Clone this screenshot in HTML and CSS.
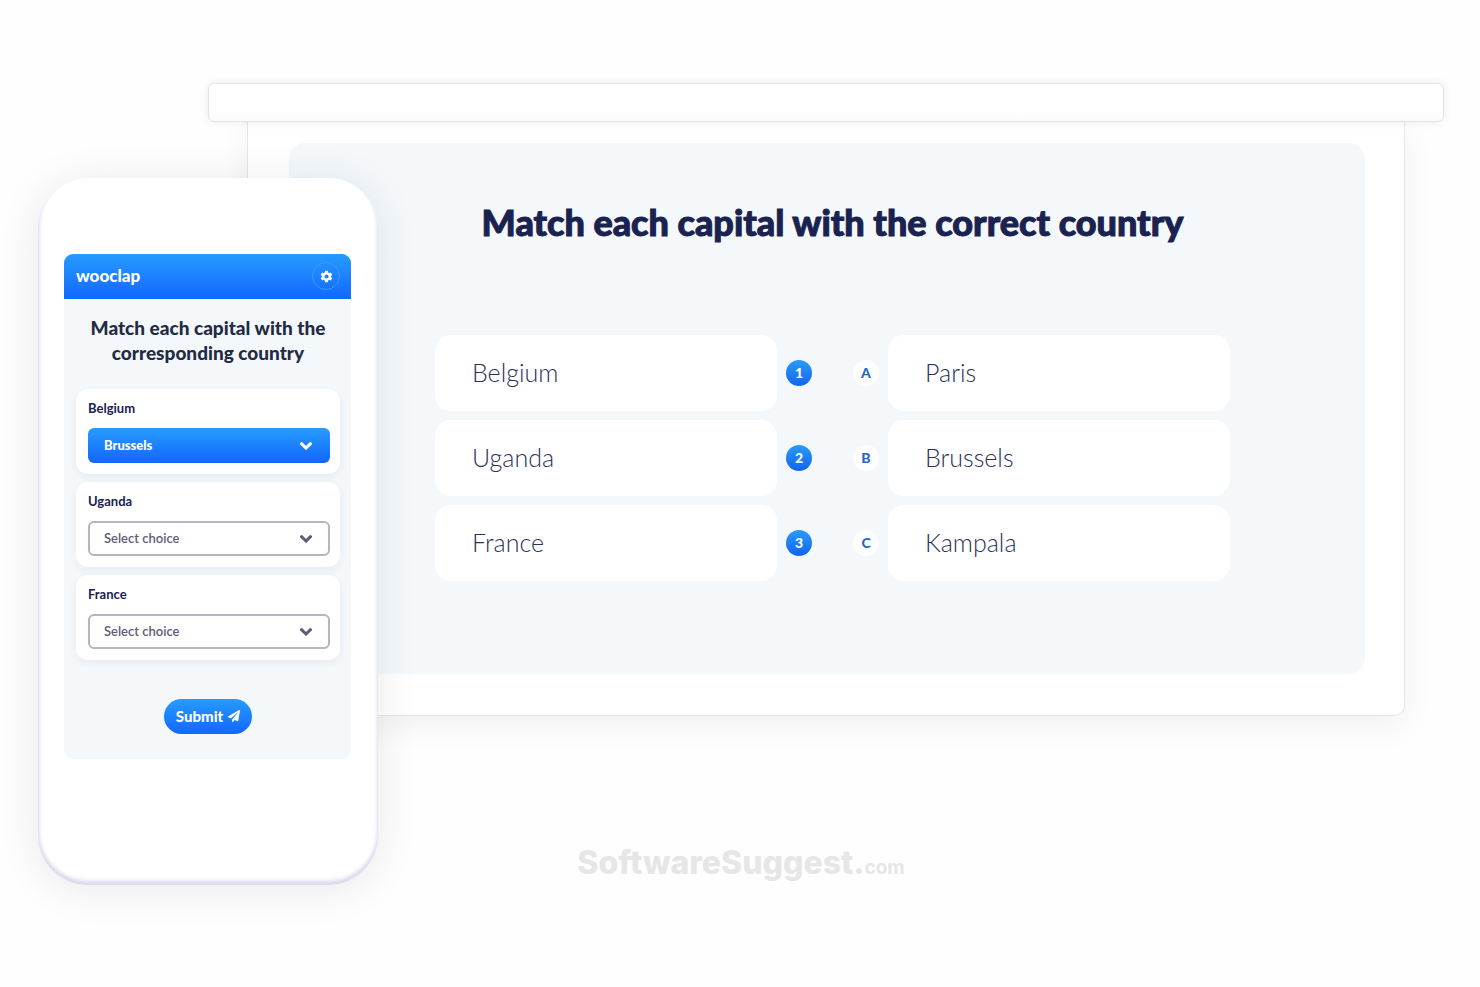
FILE: index.html
```html
<!DOCTYPE html>
<html lang="en">
<head>
<meta charset="utf-8">
<meta name="viewport" content="width=device-width, initial-scale=1">
<title>Wooclap – Matching question</title>
<link rel="stylesheet" href="styles.css">
</head>
<body>
<main class="scene">
  <section class="board" aria-labelledby="board-title">
    <div class="rail"></div>
    <div class="screen">
      <div class="slide">
        <h1 class="slide-title" id="board-title">Match each capital with the correct country</h1>
        <div class="pairs">
          <div class="tile">Belgium</div>
          <span class="badge badge-number">1</span>
          <span class="badge badge-letter">A</span>
          <div class="tile">Paris</div>
          <div class="tile">Uganda</div>
          <span class="badge badge-number">2</span>
          <span class="badge badge-letter">B</span>
          <div class="tile">Brussels</div>
          <div class="tile">France</div>
          <span class="badge badge-number">3</span>
          <span class="badge badge-letter">C</span>
          <div class="tile">Kampala</div>
        </div>
      </div>
    </div>
  </section>

  <section class="phone" aria-labelledby="phone-title">
    <div class="app">
      <header class="app-bar">
        <span class="brand">wooclap</span>
        <button class="settings" type="button" aria-label="Settings">
          <svg class="gear" viewBox="0 0 24 24" aria-hidden="true"><path fill="currentColor" fill-rule="evenodd" d="M9.5 1.5h5l.7 3.2 1.9 1.1 3.1-1 2.5 4.3-2.4 2.2v1.4l2.4 2.2-2.5 4.3-3.1-1-1.9 1.1-.7 3.2h-5l-.7-3.2-1.9-1.1-3.1 1-2.5-4.3 2.4-2.2v-1.4L1.300 9.100l2.500-4.300 3.100 1 1.900-1.100zM12 8.200a3.800 3.800 0 1 0 0 7.600 3.800 3.800 0 0 0 0-7.600z"/></svg>
        </button>
      </header>
      <form class="quiz">
        <h2 class="quiz-title" id="phone-title">Match each capital with the corresponding country</h2>
        <div class="cards">
          <div class="card">
            <label class="card-label" for="belgium">Belgium</label>
            <div class="picker picker-chosen">
              <select class="picker-select" id="belgium"><option>Brussels</option><option>Paris</option><option>Kampala</option></select>
              <svg class="chevron" viewBox="0 0 12 8" aria-hidden="true"><path d="M1.500 1.700 6 6l4.500-4.300"/></svg>
            </div>
          </div>
          <div class="card">
            <label class="card-label" for="uganda">Uganda</label>
            <div class="picker">
              <select class="picker-select" id="uganda"><option>Select choice</option><option>Brussels</option><option>Paris</option><option>Kampala</option></select>
              <svg class="chevron" viewBox="0 0 12 8" aria-hidden="true"><path d="M1.500 1.700 6 6l4.500-4.300"/></svg>
            </div>
          </div>
          <div class="card">
            <label class="card-label" for="france">France</label>
            <div class="picker">
              <select class="picker-select" id="france"><option>Select choice</option><option>Brussels</option><option>Paris</option><option>Kampala</option></select>
              <svg class="chevron" viewBox="0 0 12 8" aria-hidden="true"><path d="M1.500 1.700 6 6l4.500-4.300"/></svg>
            </div>
          </div>
        </div>
        <button class="submit" type="button">Submit
          <svg class="plane" viewBox="0 0 512 512" aria-hidden="true"><path fill="currentColor" d="M476 3.200 12.500 270.600c-18.100 10.400-15.800 35.600 2.200 43.200L121 358.400l287.300-253.200c5.500-4.900 13.300 2.600 8.600 8.300L176 407v80.500c0 23.600 28.500 32.900 42.500 15.800L282 426l124.600 52.200c14.200 6 30.400-2.900 33-18.200l72-432C515 7.800 493.300-6.800 476 3.200z"/></svg>
        </button>
      </form>
    </div>
  </section>

  <footer class="watermark">SoftwareSuggest.<span class="watermark-tld">com</span></footer>
</main>
</body>
</html>
```

FILE: styles.css
```css
* { box-sizing: border-box; }

:root {
  --navy: #1a2250;
  --mist: #f4f8fb;
  --blue: linear-gradient(#279bff, #1267ff);
}

body {
  margin: 0;
  background: #fefefe;
  color: var(--navy);
  font-family: Lato, "Liberation Sans", sans-serif;
}

h1, h2 { margin: 0; }

button, select { font: inherit; }

.scene {
  display: grid;
  grid-template-columns: 170px 170px 1fr;
  grid-template-rows: auto 1fr;
  padding: 83px 36px 48px 38px;
}

/* Projector screen */

.board { grid-area: 1 / 2 / 2 / 4; }

.rail {
  position: relative;
  height: 39px;
  border: 1px solid #e4e4e4;
  border-radius: 6px;
  background: linear-gradient(#fff 70%, #fafafa);
  box-shadow: 0 0 10px rgba(0, 0, 0, 0.08);
}

.screen {
  margin: 0 39px;
  padding: 21px 39px 41px 41px;
  border: 1px solid #e6e6e6;
  border-top: 0;
  border-radius: 0 0 10px 10px;
  background: #fff;
  box-shadow: 0 10px 32px rgba(0, 0, 0, 0.06);
}

.slide {
  padding: 56px 135px 93px 146px;
  border-radius: 16px;
  background: var(--mist);
}

.slide-title {
  margin-bottom: 90px;
  font-size: 36px;
  line-height: 46px;
  font-weight: 900;
  text-align: center;
  white-space: nowrap;
  -webkit-text-stroke: 1px currentColor;
}

.pairs {
  display: grid;
  grid-template-columns: 1fr 58px 26px 1fr;
  gap: 9px;
  align-items: center;
}

.tile {
  padding: 21px 37px 23px;
  border-radius: 16px;
  background: #fff;
  color: #2c3158;
  font-size: 25px;
  line-height: 32px;
  font-weight: 300;
}

.badge {
  display: grid;
  place-items: center;
  width: 26px;
  height: 26px;
  border-radius: 50%;
  font-size: 14px;
  line-height: 16px;
  font-weight: 900;
}

.badge-number {
  background: linear-gradient(#2a9bf5, #1264f2);
  color: #fff;
}

.badge-letter {
  background: #fdfefe;
  color: #2468c4;
}

/* Phone */

.phone {
  position: relative;
  grid-area: 1 / 1 / 3 / 3;
  margin-top: 95px;
  padding: 76px 27px 126px 26px;
  border-radius: 50px;
  background: #fff;
  box-shadow:
    inset 0 -4px 4px #dcd8ea,
    inset 2px -2px 3px #efedfa,
    inset -2px -2px 3px #f6f5fa,
    0 4px 40px rgba(30, 40, 60, 0.1);
}

.app {
  overflow: hidden;
  border-radius: 9px;
  background: var(--mist);
}

.app-bar {
  display: flex;
  align-items: center;
  justify-content: space-between;
  padding: 8px 11px 9px 12px;
  background: var(--blue);
  color: #fff;
}

.brand {
  font-size: 17px;
  line-height: 20px;
  font-weight: 900;
}

.settings {
  display: grid;
  place-items: center;
  width: 28px;
  height: 28px;
  padding: 0;
  border: 1px solid #3c9aff;
  border-radius: 50%;
  background: none;
  color: #fff;
}

.gear {
  width: 13px;
  height: 13px;
}

.quiz {
  display: flex;
  flex-direction: column;
  align-items: center;
  padding: 16px 11px 25px 12px;
}

.quiz-title {
  margin-bottom: 24px;
  color: #222b42;
  font-size: 19px;
  line-height: 25px;
  font-weight: 900;
  text-align: center;
}

.cards {
  display: grid;
  gap: 8px;
  width: 100%;
  margin-bottom: 39px;
}

.card {
  display: grid;
  gap: 10px;
  padding: 10px 10px 11px 12px;
  border-radius: 12px;
  background: #fff;
  box-shadow: 0 3px 8px rgba(30, 40, 60, 0.06);
}

.card-label {
  font-size: 13px;
  line-height: 19px;
  font-weight: 700;
}

.picker {
  position: relative;
  color: #5f5c78;
}

.picker-select {
  display: block;
  appearance: none;
  width: 100%;
  height: 35px;
  padding: 0 40px 1px 14px;
  border: 2px solid #b4b4c4;
  border-radius: 6px;
  background: #fff;
  color: inherit;
  font-size: 13px;
  font-weight: 600;
}

.picker-chosen { color: #fff; }

.picker-chosen .picker-select {
  border-color: transparent;
  background: var(--blue) border-box;
  font-weight: 900;
}

.chevron {
  position: absolute;
  top: 14px;
  right: 18px;
  width: 12px;
  height: 8px;
  fill: none;
  stroke: currentColor;
  stroke-width: 3;
  stroke-linecap: round;
  pointer-events: none;
}

.submit {
  display: flex;
  align-items: center;
  gap: 5px;
  height: 35px;
  padding: 0 12px 2px;
  border: 0;
  border-radius: 18px;
  background: var(--blue);
  color: #fff;
  font-size: 15px;
  font-weight: 900;
}

.plane {
  width: 12px;
  height: 12px;
}

/* Watermark */

.watermark {
  grid-area: 2 / 1 / 3 / 4;
  align-self: end;
  justify-self: center;
  color: #e6e6e6;
  font-family: Inter, "Liberation Sans", sans-serif;
  font-size: 32px;
  line-height: 34px;
  font-weight: 800;
}

.watermark-tld {
  font-size: 19px;
  font-weight: 700;
}
```
